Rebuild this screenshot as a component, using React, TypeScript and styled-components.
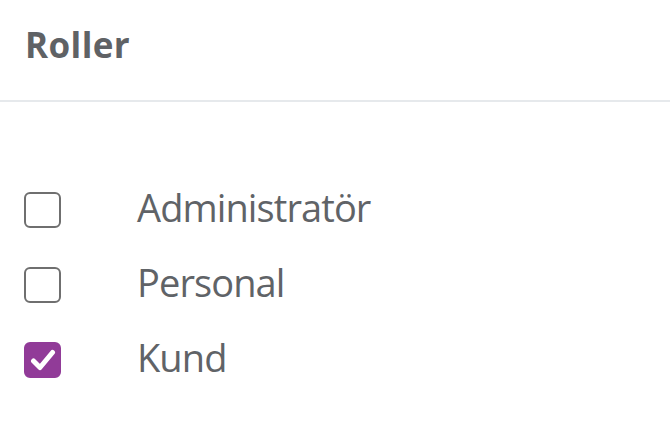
import React, { useState } from "react";
import styled, { createGlobalStyle } from "styled-components";

const Global = createGlobalStyle`
  html, body { margin: 0; padding: 0; background: #ffffff; }
  body { font-family: "Open Sans", "Noto Sans", sans-serif; }
`;

const Page = styled.div`
  width: 670px;
  height: 438px;
  background: #ffffff;
  display: flex;
  flex-direction: column;
`;

const Header = styled.div`
  box-sizing: border-box;
  height: 102px;
  padding: 22px 25px 0;
  border-bottom: 2px solid #e6e9ec;
`;

const Title = styled.h2`
  margin: 0;
  font-family: "Open Sans", sans-serif;
  font-weight: 700;
  font-size: 35px;
  line-height: 46px;
  letter-spacing: 0.4px;
  color: #5f6265;
`;

const List = styled.div`
  display: flex;
  flex-direction: column;
  padding: 70px 0 0 24px;
`;

const Row = styled.label`
  display: flex;
  align-items: center;
  height: 75px;
  cursor: pointer;
`;

const Box = styled.span<{ $checked: boolean }>`
  box-sizing: border-box;
  width: 37px;
  height: 36px;
  border-radius: 6px;
  border: 2.5px solid ${(p) => (p.$checked ? "#913b98" : "#6f6f6f")};
  background: ${(p) => (p.$checked ? "#913b98" : "#ffffff")};
  display: flex;
  align-items: center;
  justify-content: center;
  flex: none;
`;

const Label = styled.span`
  margin-left: 76px;
  padding-bottom: 5px;
  font-size: 38px;
  letter-spacing: -0.9px;
  color: #606367;
`;

const roles = ["Administratör", "Personal", "Kund"];

export default function App() {
  const [checked, setChecked] = useState<Record<string, boolean>>({ Kund: true });
  return (
    <Page>
      <Global />
      <Header>
        <Title>Roller</Title>
      </Header>
      <List>
        {roles.map((r) => (
          <Row key={r} onClick={() => setChecked((c) => ({ ...c, [r]: !c[r] }))}>
            <Box $checked={!!checked[r]}>
              {checked[r] && (
                <svg width="26" height="24" viewBox="0 0 26 24">
                  <path d="M3.5 13 L10 19.5 L22.5 4.5" fill="none" stroke="#fff" strokeWidth="5" strokeLinecap="round" strokeLinejoin="round" />
                </svg>
              )}
            </Box>
            <Label>{r}</Label>
          </Row>
        ))}
      </List>
    </Page>
  );
}
